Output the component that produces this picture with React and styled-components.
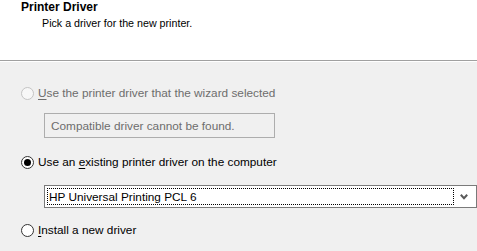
import styled, { createGlobalStyle } from 'styled-components'

const GlobalStyle = createGlobalStyle`
  html, body {
    margin: 0;
    padding: 0;
    background: #f0f0f0;
  }
  body {
    font-family: "Liberation Sans", Arial, sans-serif;
    width: 477px;
    height: 251px;
    overflow: hidden;
  }
`

const Page = styled.div`
  display: flex;
  flex-direction: column;
  width: 477px;
  height: 251px;
  background: #f0f0f0;
`

const Header = styled.div`
  height: 61px;
  background: #ffffff;
  border-bottom: 1px solid #a0a0a0;
  box-shadow: 0 1px 0 #ffffff;
  box-sizing: border-box;
  padding: 0 0 0 21px;
`

const Title = styled.div`
  font-size: 12px;
  font-weight: bold;
  line-height: 15px;
  color: #000;
`

const Subtitle = styled.div`
  font-size: 10.7px;
  line-height: 14px;
  margin: 1px 0 0 21px;
  color: #000;
`

const Body = styled.div`
  display: flex;
  flex-direction: column;
  padding: 24px 0 0 21px;
`

const RadioRow = styled.label`
  display: flex;
  align-items: center;
  gap: 4px;
  height: 16px;
  font-size: 11.8px;
  color: ${({ disabled }) => (disabled ? '#6d6d6d' : '#000')};
  margin-top: ${({ gap }) => gap || 0}px;
`

const RadioCircle = styled.span`
  position: relative;
  width: 13px;
  height: 13px;
  box-sizing: border-box;
  border-radius: 50%;
  border: 1px solid ${({ disabled }) => (disabled ? '#c4c4c4' : '#333')};
  background: ${({ disabled }) => (disabled ? '#f7f7f7' : '#fff')};
  flex-shrink: 0;

  &::after {
    content: '';
    display: ${({ checked }) => (checked ? 'block' : 'none')};
    position: absolute;
    left: 2px;
    top: 2px;
    width: 7px;
    height: 7px;
    border-radius: 50%;
    background: #000;
  }
`

const Key = styled.span`
  text-decoration: underline;
  text-underline-offset: 2px;
`

const StaticBox = styled.div`
  margin: 12px 0 0 23px;
  width: 231px;
  height: 25px;
  box-sizing: border-box;
  border: 1px solid #adadad;
  background: #f0f0f0;
  color: #6d6d6d;
  font-size: 11.8px;
  display: flex;
  align-items: center;
  padding-left: 6px;
`

const Select = styled.div`
  margin: 15px 0 0 23px;
  width: 433px;
  height: 23px;
  box-sizing: border-box;
  border: 1px solid #7a7a7a;
  background: #fff;
  display: flex;
  align-items: center;
  padding: 2px;
`

const SelectValue = styled.div`
  flex: 1;
  height: 17px;
  box-sizing: border-box;
  border: 1px dotted #000;
  font-size: 11.8px;
  color: #000;
  display: flex;
  align-items: center;
  padding-left: 1px;
`

const Chevron = styled.div`
  width: 20px;
  display: flex;
  justify-content: center;
  align-items: center;
`

function Radio({ checked, disabled, gap, children }) {
  return (
    <RadioRow disabled={disabled} gap={gap}>
      <RadioCircle checked={checked} disabled={disabled} />
      <span>{children}</span>
    </RadioRow>
  )
}

export default function App() {
  return (
    <Page>
      <GlobalStyle />
      <Header>
        <Title>Printer Driver</Title>
        <Subtitle>Pick a driver for the new printer.</Subtitle>
      </Header>
      <Body>
        <Radio disabled>
          <Key>U</Key>se the printer driver that the wizard selected
        </Radio>
        <StaticBox>Compatible driver cannot be found.</StaticBox>
        <Radio checked gap={16}>
          Use an <Key>e</Key>xisting printer driver on the computer
        </Radio>
        <Select>
          <SelectValue>HP Universal Printing PCL 6</SelectValue>
          <Chevron>
            <svg width="8" height="6" viewBox="0 0 8 6">
              <path d="M0.8 0.8 L4 4.2 L7.2 0.8" stroke="#5a5a5a" strokeWidth="2" fill="none" />
            </svg>
          </Chevron>
        </Select>
        <Radio gap={14}>
          <Key>I</Key>nstall a new driver
        </Radio>
      </Body>
    </Page>
  )
}
